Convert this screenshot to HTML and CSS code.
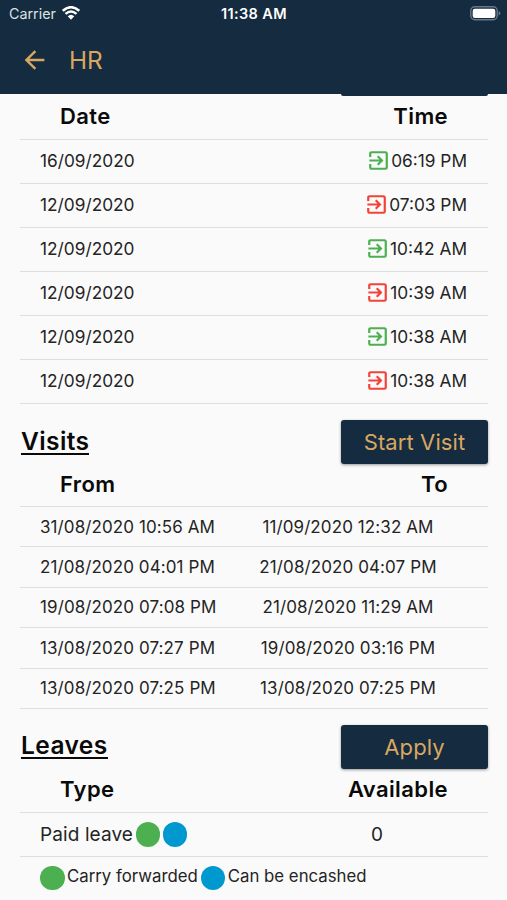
FILE: index.html
```html
<!DOCTYPE html>
<html lang="en">
<head>
    <meta charset="UTF-8">
    <meta name="viewport" content="width=device-width, initial-scale=1.0">
    <title>HR</title>
    <link rel="stylesheet" href="styles.css">
</head>
<body>
    <svg class="defs" width="0" height="0">
        <symbol id="enter" viewBox="0 0 20 20">
            <path d="M1.3 6.4V2.8Q1.3 1.3 2.8 1.3H17.2Q18.7 1.3 18.7 2.8V17.2Q18.7 18.7 17.2 18.7H2.8Q1.3 18.7 1.3 17.2V13.6M0.4 10H13M9.2 5.6L13.6 10L9.2 14.4" fill="none" stroke="currentColor" stroke-width="2.3"/>
        </symbol>
    </svg>
    <header class="header">
        <div class="status">
            <div class="carrier">
                <span>Carrier</span>
                <svg class="wifi" width="18" height="14" viewBox="0 0 18 14">
                    <path d="M0.8 4.8Q9-2.4 17.2 4.8M3.5 7.9Q9 3.2 14.5 7.9" fill="none" stroke="#fff" stroke-width="2.5"/>
                    <path d="M5.7 10.2Q9 7.2 12.3 10.2L9 13.7Z" fill="#fff"/>
                </svg>
            </div>
            <span class="clock">11:38 AM</span>
            <svg class="battery" width="31" height="15" viewBox="0 0 31 15">
                <rect x="0.8" y="0.8" width="26.4" height="13" rx="4" fill="none" stroke="#66798a" stroke-width="1.4"/>
                <rect x="2.7" y="2.7" width="22.6" height="9.2" rx="2.2" fill="#fff"/>
                <path d="M28.6 5V9.6Q30.3 9 30.3 7.3T28.6 5Z" fill="#66798a"/>
            </svg>
        </div>
        <div class="bar">
            <svg class="back" width="21" height="20" viewBox="0 0 21 20">
                <path d="M20.4 10H2.5M11.4 1.2L2.4 10L11.4 18.8" fill="none" stroke="currentColor" stroke-width="2.4"/>
            </svg>
            <h1 class="title">HR</h1>
        </div>
    </header>
    <main class="content">
        <div class="cut-button"></div>
        <section class="attendance">
            <div class="head"><span>Date</span><span>Time</span></div>
            <div class="row"><span>16/09/2020</span><span class="time in"><svg><use href="#enter"/></svg>06:19 PM</span></div>
            <div class="row"><span>12/09/2020</span><span class="time out"><svg><use href="#enter"/></svg>07:03 PM</span></div>
            <div class="row"><span>12/09/2020</span><span class="time in"><svg><use href="#enter"/></svg>10:42 AM</span></div>
            <div class="row"><span>12/09/2020</span><span class="time out"><svg><use href="#enter"/></svg>10:39 AM</span></div>
            <div class="row"><span>12/09/2020</span><span class="time in"><svg><use href="#enter"/></svg>10:38 AM</span></div>
            <div class="row"><span>12/09/2020</span><span class="time out"><svg><use href="#enter"/></svg>10:38 AM</span></div>
        </section>
        <section class="visits">
            <div class="section-top">
                <h2>Visits</h2>
                <button class="btn">Start Visit</button>
            </div>
            <div class="head"><span>From</span><span>To</span></div>
            <div class="row"><span>31/08/2020 10:56 AM</span><span class="to">11/09/2020 12:32 AM</span></div>
            <div class="row"><span>21/08/2020 04:01 PM</span><span class="to">21/08/2020 04:07 PM</span></div>
            <div class="row"><span>19/08/2020 07:08 PM</span><span class="to">21/08/2020 11:29 AM</span></div>
            <div class="row"><span>13/08/2020 07:27 PM</span><span class="to">19/08/2020 03:16 PM</span></div>
            <div class="row"><span>13/08/2020 07:25 PM</span><span class="to">13/08/2020 07:25 PM</span></div>
        </section>
        <section class="leaves">
            <div class="section-top">
                <h2>Leaves</h2>
                <button class="btn">Apply</button>
            </div>
            <div class="head"><span>Type</span><span>Available</span></div>
            <div class="row">
                <span class="type">Paid leave<i class="dot green"></i><i class="dot blue"></i></span>
                <span class="count">0</span>
            </div>
            <div class="legend">
                <i class="dot green"></i><span class="carry">Carry forwarded</span>
                <i class="dot blue"></i><span>Can be encashed</span>
            </div>
        </section>
    </main>
</body>
</html>
```
FILE: styles.css
```css
* { margin: 0; padding: 0; box-sizing: border-box; }
body {
    height: 900px;
    overflow: hidden;
    background-color: #fafafa;
    color: #242424;
    font-family: Inter, "Liberation Sans", sans-serif;
}
.defs { position: absolute; }
.header {
    height: 94px;
    background-color: #152b3f;
    color: #d9a761;
}
.status {
    display: grid;
    grid-template-columns: 1fr auto 1fr;
    align-items: center;
    height: 27px;
    padding: 0 6px 0 9px;
    color: #fff;
}
.carrier {
    display: flex;
    align-items: center;
    gap: 6px;
    font-size: 14.3px;
    color: #dce1e5;
}
.wifi { margin-top: -2px; }
.clock {
    margin-right: 2px;
    font-size: 14.5px;
    font-weight: 600;
    letter-spacing: 0.4px;
}
.battery { justify-self: end; }
.bar {
    display: flex;
    align-items: center;
    gap: 24px;
    height: 66px;
    padding-left: 24px;
}
.title {
    font-size: 24.3px;
    font-weight: 400;
}
.content { padding: 0 19px 0 20px; }
.cut-button {
    width: 147px;
    height: 2px;
    margin-left: auto;
    background-color: #152b3f;
    border-radius: 0 0 3px 3px;
}
.head {
    display: flex;
    justify-content: space-between;
    align-items: center;
    height: 43px;
    padding: 0 40px;
    font-size: 22px;
    font-weight: 600;
    letter-spacing: 0.4px;
    color: #0a0a0a;
}
.attendance .head { padding-bottom: 3px; }
.row {
    display: flex;
    justify-content: space-between;
    align-items: center;
    height: 44px;
    padding: 0 20px;
    border-top: 1px solid #dedede;
    font-size: 17.5px;
    white-space: nowrap;
}
.attendance .row {
    padding: 0 21px 2px 20px;
    font-size: 17.3px;
}
.attendance .row:last-child {
    height: 45px;
    padding-bottom: 3px;
    border-bottom: 1px solid #dedede;
}
.time {
    display: flex;
    align-items: center;
    gap: 3px;
}
.time svg { width: 19px; height: 19px; }
.in svg { color: #4caf50; }
.out svg { color: #f44336; }
.section-top {
    display: flex;
    justify-content: space-between;
    align-items: center;
    height: 44px;
    margin-top: 16px;
}
.section-top h2 {
    margin-left: 1px;
    border-bottom: 2px solid #0a0a0a;
    font-size: 24.5px;
    font-weight: 600;
    letter-spacing: 0.4px;
    line-height: 23px;
    color: #0a0a0a;
}
.btn {
    width: 147px;
    height: 44px;
    border: 0;
    border-radius: 3px;
    background-color: #152b3f;
    box-shadow: 0 1px 3px rgba(0, 0, 0, 0.4);
    color: #d9a761;
    font-family: inherit;
    font-size: 22px;
    letter-spacing: 0.1px;
}
.visits .head {
    height: 42px;
    padding-bottom: 2px;
}
.visits .row {
    height: 40.4px;
    font-size: 17px;
    letter-spacing: 0.1px;
}
.visits .row:last-child {
    height: 41.4px;
    border-bottom: 1px solid #dedede;
}
.to {
    width: 200px;
    margin-right: 20px;
    text-align: center;
}
.leaves .section-top { margin-top: 16px; }
.leaves .head {
    height: 43px;
    padding-bottom: 2px;
}
.type {
    display: flex;
    align-items: center;
    font-size: 19px;
    letter-spacing: 0.1px;
}
.dot {
    flex: none;
    width: 24.5px;
    height: 24.5px;
    border-radius: 50%;
}
.type .dot { margin-left: 2.6px; }
.green { background-color: #4caf50; }
.blue { background-color: #0099cf; }
.count {
    margin-right: 85px;
    font-size: 19px;
}
.legend {
    display: flex;
    height: 44px;
    padding: 9px 20px 0;
    border-top: 1px solid #dedede;
    font-size: 16.8px;
    line-height: 21px;
}
.legend .dot { margin-top: 0; }
.legend span { margin-left: 2.5px; }
.legend .carry { margin-right: 3px; }
```
